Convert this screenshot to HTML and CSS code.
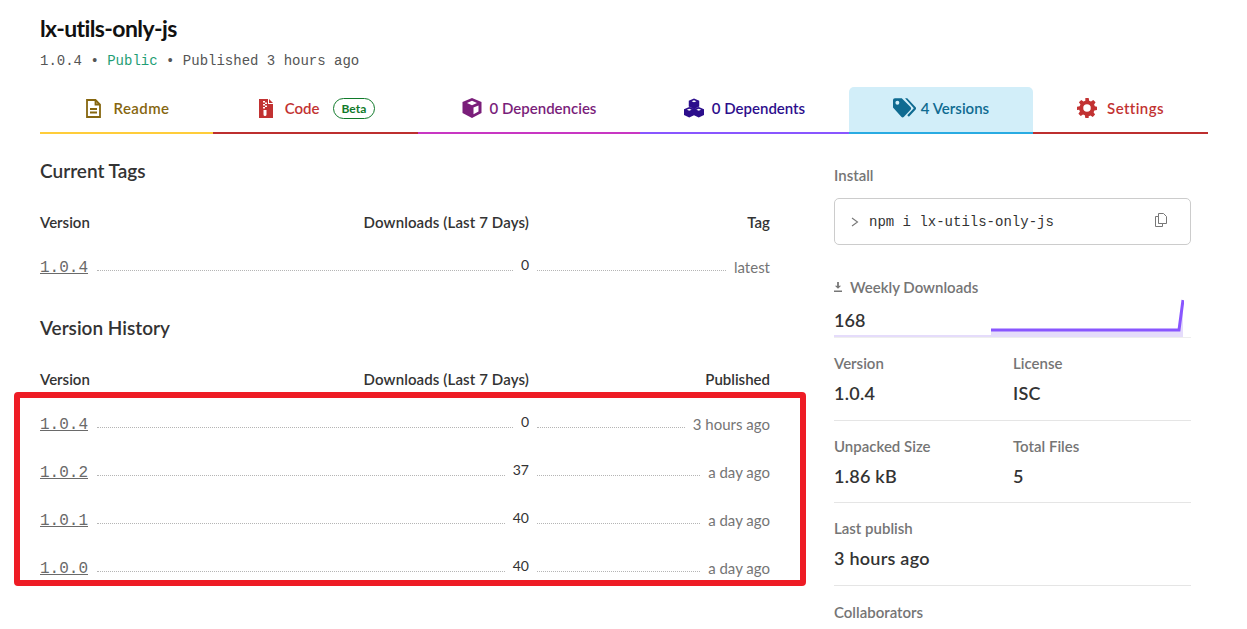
FILE: index.html
```html
<!DOCTYPE html>
<html lang="en">
<head>
  <meta charset="UTF-8">
  <title>lx-utils-only-js</title>
  <link rel="stylesheet" href="styles.css">
</head>
<body>
  <div class="page">
    <header class="pkg-head">
      <h1>lx-utils-only-js</h1>
      <p class="pkg-meta">1.0.4 • <span class="public">Public</span> • Published 3 hours ago</p>
    </header>

    <nav class="tabs">
      <a class="tab tab-readme">
        <svg class="tab-icon icon-readme" viewBox="0 0 15 19"><path fill="none" stroke="currentColor" stroke-width="1.800" d="M1 1h8.500L14 5.500V18H1zM9.500 1v4.500H14"/><path stroke="currentColor" stroke-width="1.800" d="M4 10h7M4 13.500h7"/></svg>
        <span>Readme</span>
      </a>
      <a class="tab tab-code">
        <svg class="tab-icon icon-code" viewBox="0 0 14 19"><path fill="currentColor" d="M0 0h9v5h5v14H0z"/><path fill="currentColor" d="M10 0l4 4h-4z"/><path fill="#fff" d="M4 2h2v1.500H4zM6 3.500h2V5H6zM4 5h2v1.500H4zM6 6.500h2V8H6zM4 8h2v1.500H4zM4.500 11h3v4.500a1.500 1.500 0 0 1-3 0z"/></svg>
        <span>Code</span>
        <span class="beta">Beta</span>
      </a>
      <a class="tab tab-deps">
        <svg class="tab-icon icon-cube" viewBox="0 0 20 20"><path fill="currentColor" fill-rule="evenodd" d="M10 0l9.500 4v11L10 20 .5 15V4zM10 2.800L5 5l5 2.200L15 5zM11.500 9.500v6.800l5-2.700V7.400z"/></svg>
        <span>0 Dependencies</span>
      </a>
      <a class="tab tab-dependents">
        <svg class="tab-icon icon-cube" viewBox="0 0 21 20"><path fill="currentColor" fill-rule="evenodd" d="M10.500 0l5.500 2.300v6.200l-5.500 2.500L5 8.500V2.300zM10.500 1.800L8 2.900l2.500 1.100L13 2.900zM5.500 9l5 2 5-2 5.500 2.300v6L15.500 20l-5-2.400L5.500 20 0 17.300v-6zM5.500 10.800L3 11.900 5.500 13 8 11.900zM15.500 10.800L13 11.900l2.500 1.100 2.500-1.100z"/></svg>
        <span>0 Dependents</span>
      </a>
      <a class="tab tab-versions">
        <svg class="tab-icon icon-tags" viewBox="0 0 21 18"><path fill="currentColor" fill-rule="evenodd" d="M0 1.800A1.800 1.800 0 0 1 1.800 0H8l8 8.200a1.700 1.700 0 0 1 0 2.300l-6 6.500a1.700 1.700 0 0 1-2.400 0L0 8.500zM4 6a1.800 1.800 0 1 0 0-3.600A1.800 1.800 0 0 0 4 6z"/><path fill="currentColor" d="M11 0h2l7.500 8a1.800 1.800 0 0 1 0 2.500L14.500 17l-1.500-1.400L19 9.300z"/></svg>
        <span>4 Versions</span>
      </a>
      <a class="tab tab-settings">
        <svg class="tab-icon icon-gear" viewBox="0 0 24 24"><path fill="currentColor" fill-rule="evenodd" d="M10 0h4l.6 3.200 2.200.9 2.700-1.800 2.800 2.800-1.800 2.700.9 2.200L24 10.600v3.800l-3.200.6-.9 2.200 1.800 2.700-2.800 2.800-2.700-1.800-2.200.9L14 24h-4l-.6-3.200-2.200-.9-2.700 1.800-2.800-2.800 1.800-2.700-.9-2.200L0 14.400v-3.800L3.200 10l.9-2.200L2.300 5.100l2.800-2.800 2.700 1.800 2.200-.9zM12 7.500a4.500 4.500 0 1 0 0 9 4.500 4.500 0 0 0 0-9z"/></svg>
        <span>Settings</span>
      </a>
    </nav>

    <div class="columns">
      <main class="versions">
        <h2>Current Tags</h2>
        <div class="row row-head">
          <span>Version</span>
          <span class="head-mid">Downloads (Last 7 Days)</span>
          <span class="head-end">Tag</span>
        </div>
        <div class="row">
          <div class="cell"><a class="ver">1.0.4</a><i class="dots"></i><span class="count">0</span></div>
          <div class="cell"><i class="dots"></i><span class="when">latest</span></div>
        </div>

        <h2 class="second">Version History</h2>
        <div class="row row-head">
          <span>Version</span>
          <span class="head-mid">Downloads (Last 7 Days)</span>
          <span class="head-end">Published</span>
        </div>
        <div class="history">
          <div class="row">
            <div class="cell"><a class="ver">1.0.4</a><i class="dots"></i><span class="count">0</span></div>
            <div class="cell"><i class="dots"></i><span class="when">3 hours ago</span></div>
          </div>
          <div class="row">
            <div class="cell"><a class="ver">1.0.2</a><i class="dots"></i><span class="count">37</span></div>
            <div class="cell"><i class="dots"></i><span class="when">a day ago</span></div>
          </div>
          <div class="row">
            <div class="cell"><a class="ver">1.0.1</a><i class="dots"></i><span class="count">40</span></div>
            <div class="cell"><i class="dots"></i><span class="when">a day ago</span></div>
          </div>
          <div class="row">
            <div class="cell"><a class="ver">1.0.0</a><i class="dots"></i><span class="count">40</span></div>
            <div class="cell"><i class="dots"></i><span class="when">a day ago</span></div>
          </div>
          <div class="highlight"></div>
        </div>
      </main>

      <aside class="side">
        <h3 class="side-label">Install</h3>
        <div class="install">
          <svg class="prompt" viewBox="0 0 8 10"><path fill="none" stroke="#777" stroke-width="1.100" d="M1 1l5.500 4L1 9"/></svg>
          <code>npm i lx-utils-only-js</code>
          <svg class="copy" viewBox="0 0 12 14"><path fill="#fff" stroke="#777" d="M3.500.5h5l3 3v7h-8z"/><path fill="#fff" stroke="#777" d="M.5 3.500h3v7h4v3h-7z"/></svg>
        </div>

        <div class="weekly">
          <h3 class="side-label weekly-label">
            <svg class="dl" viewBox="0 0 9 11"><path fill="#777" d="M3.500 0h2v4H8L4.500 7.500 1 4h2.500zM0 9.500h9V11H0z"/></svg>
            Weekly Downloads
          </h3>
          <p class="weekly-num">168</p>
          <svg class="spark" viewBox="0 0 350 40" width="350" height="40">
            <path fill="#e5dcfb" d="M0 38h157v-6h189l3-29v37H0z"/>
            <path fill="none" stroke="#8956ff" stroke-width="3" d="M157 33h188l4-30"/>
          </svg>
        </div>

        <div class="stats">
          <div><h3 class="side-label">Version</h3><p class="stat">1.0.4</p></div>
          <div><h3 class="side-label">License</h3><p class="stat">ISC</p></div>
        </div>
        <div class="stats">
          <div><h3 class="side-label">Unpacked Size</h3><p class="stat">1.86 kB</p></div>
          <div><h3 class="side-label">Total Files</h3><p class="stat">5</p></div>
        </div>
        <div class="stats">
          <div><h3 class="side-label">Last publish</h3><p class="stat">3 hours ago</p></div>
        </div>
        <h3 class="side-label collab">Collaborators</h3>
      </aside>
    </div>
  </div>
</body>
</html>
```

FILE: styles.css
```css
html, body { margin: 0; height: 629px; overflow: hidden; background: #fff; }
body { font-family: "Lato", "Noto Sans", sans-serif; color: #333; }
h1, h2, h3, p { margin: 0; font-weight: normal; }

.page { padding: 0 39px 0 40px; }

.pkg-head { height: 87px; }
h1 { padding-top: 13px; font-size: 23px; line-height: 30px; font-weight: 700; letter-spacing: -.6px; color: #111; }
.pkg-meta { margin-top: 8px; font-family: "Liberation Mono", monospace; font-size: 14px; line-height: 20px; color: #555; }
.public { color: #1f9e75; }

.tabs { display: grid; grid-template-columns: 173px 205px 222px 209px 184px 175px; height: 47px; }
.tab { display: flex; align-items: center; justify-content: center; gap: 10px; height: 42px; padding-bottom: 3px; border-bottom: 2px solid; border-radius: 5px 5px 0 0; font-size: 15px; font-weight: 600; }
.tab-readme { padding-left: 2px; color: #86660f; border-color: #ffcd3a; }
.tab-code { gap: 12px; padding-left: 3px; color: #c23232; border-color: #bd2f2f; }
.tab-deps { color: #7a1e7a; border-color: #c836c3; }
.tab-dependents { color: #2c0e8c; border-color: #8956ff; }
.tab-versions { gap: 5px; color: #0f6b91; border-color: #29abe2; background: #d2eef9; }
.tab-settings { color: #c23232; border-color: #bd2f2f; }
.tab-readme span, .tab-settings span { letter-spacing: .4px; }
.tab-icon { flex: none; }
.icon-readme { width: 15px; height: 19px; margin-right: 3px; }
.icon-code { width: 14px; height: 19px; }
.icon-cube { width: 20px; height: 20px; margin-right: -2px; }
.icon-tags { width: 23px; height: 20px; }
.icon-gear { width: 20px; height: 20px; }
.tab .beta { margin-left: 1px; padding: 0 8px; border: 1px solid #107a2a; border-radius: 11px; font-size: 12px; font-weight: 700; line-height: 19px; letter-spacing: 0; color: #107a2a; }

.columns { display: grid; grid-template-columns: 730px 357px; gap: 64px; }

h2 { font-size: 19px; line-height: 26px; font-weight: 600; color: #333; }
.versions h2 { padding-top: 24px; }
.versions h2.second { padding-top: 32px; }

.row { display: grid; grid-template-columns: 489px 241px; height: 48px; }
.row-head { grid-template-columns: 100px 389px 241px; height: 24px; margin: 27px 0 0; font-size: 15px; line-height: 22px; font-weight: 600; }
.head-mid { white-space: nowrap; justify-self: end; letter-spacing: .12px; }
.head-end { justify-self: end; }

.cell { display: flex; align-items: flex-end; height: 30px; margin-top: 13px; }
.ver { font-family: "Liberation Mono", monospace; font-size: 16px; line-height: 20px; color: #6a6a6a; text-decoration: underline; }
.dots { flex: 1; margin: 0 8px 7px 9px; border-bottom: 1px dotted #b5b5b5; }
.cell + .cell .dots { margin-left: 8px; }
.count { position: relative; top: -3px; font-size: 14px; line-height: 20px; color: #333; }
.when { margin-bottom: 1px; font-size: 15px; line-height: 20px; color: #757575; }
.history { position: relative; }

.highlight { position: absolute; left: -26px; top: 0; width: 792px; height: 194px; box-sizing: border-box; border: 6px solid #ee1c25; border-radius: 4px; pointer-events: none; }

.side { padding-top: 30px; }
.side-label { font-size: 15px; line-height: 22px; font-weight: 600; color: #757575; }
.install { display: flex; align-items: center; height: 45px; margin-top: 12px; padding: 0 23px 0 16px; border: 1px solid #ccc; border-radius: 5px; }
.install code { flex: 1; margin-left: 10px; font-family: "Liberation Mono", monospace; font-size: 14px; color: #333; }
.prompt { width: 8px; height: 10px; }
.copy { width: 12px; height: 14px; margin-top: -3px; }

.weekly { position: relative; height: 61px; margin-top: 31px; border-bottom: 1px solid #eee; }
.weekly-label { display: flex; align-items: center; gap: 8px; }
.dl { width: 8px; height: 10px; }
.weekly-num { position: relative; margin-top: 10px; font-size: 18px; line-height: 24px; font-weight: 600; color: #333; }
.spark { position: absolute; left: 0; bottom: 0; }

.stats { display: grid; grid-template-columns: 179px 1fr; height: 81.5px; border-bottom: 1px solid #e5e5e5; }
.stats .side-label { padding-top: 14px; }
.stat { margin-top: 6px; font-size: 18px; line-height: 26px; font-weight: 600; letter-spacing: .25px; color: #333; }
.collab { padding-top: 15px; }
```
